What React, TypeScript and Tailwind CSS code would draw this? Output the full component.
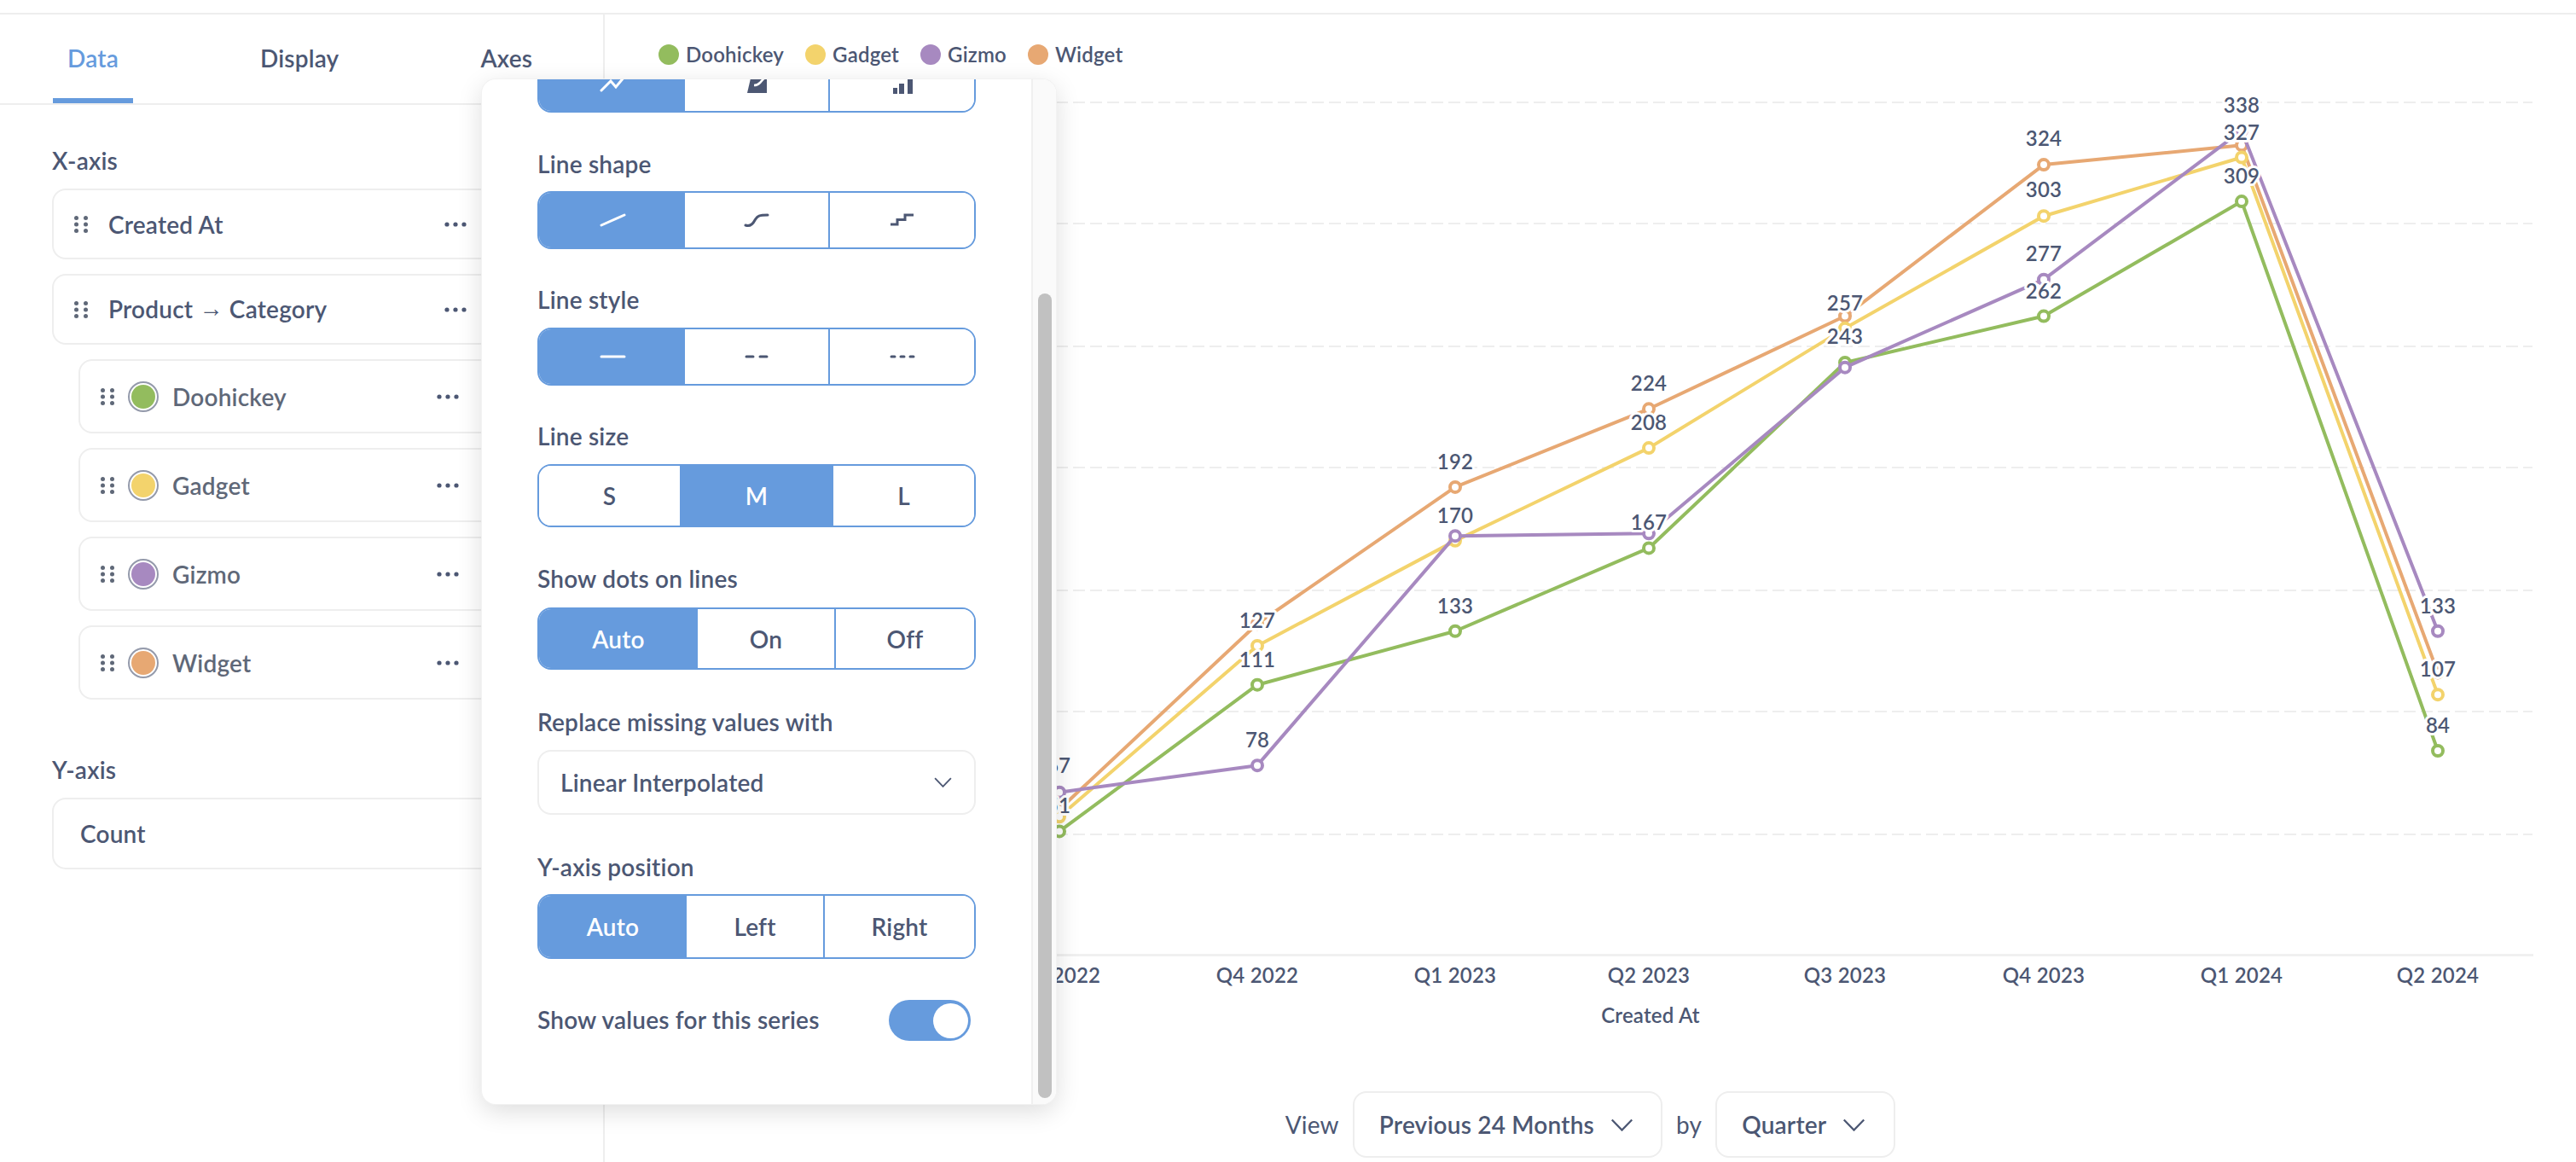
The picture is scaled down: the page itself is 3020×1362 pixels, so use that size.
import { useMemo } from "react";

const quarters = [1242, 1474, 1706, 1933, 2163, 2396, 2628, 2858];
const quarterNames = [
  "Q3 2022",
  "Q4 2022",
  "Q1 2023",
  "Q2 2023",
  "Q3 2023",
  "Q4 2023",
  "Q1 2024",
  "Q2 2024",
];

const yFor = (value: number) => 1120.4 - 2.862 * value;

// drawn in this order, last one on top
const series = [
  {
    name: "Doohickey",
    color: "#93BC5E",
    values: [51, 111, 133, 167, 243, 262, 309, 84],
    legendClass: "bg-[#93BC5E]",
  },
  {
    name: "Widget",
    color: "#E7A873",
    values: [60, 136, 192, 224, 262, 324, 332, 116],
    legendClass: "bg-[#E7A873]",
  },
  {
    name: "Gadget",
    color: "#F3D36C",
    values: [57, 127, 170, 208, 257, 303, 327, 107],
    legendClass: "bg-[#F3D36C]",
  },
  {
    name: "Gizmo",
    color: "#A789C0",
    values: [67, 78, 172, 173, 241, 277, 338, 133],
    legendClass: "bg-[#A789C0]",
  },
];

const legendOrder = ["Doohickey", "Gadget", "Gizmo", "Widget"].map(
  (name) => series.find((s) => s.name === name)!,
);

const valueLabels = [
  { x: 1241, y: 896, text: "67" },
  { x: 1241, y: 943, text: "51" },
  { x: 1474, y: 726, text: "127" },
  { x: 1474, y: 772, text: "111" },
  { x: 1474, y: 866, text: "78" },
  { x: 1706, y: 540, text: "192" },
  { x: 1706, y: 603, text: "170" },
  { x: 1706, y: 709, text: "133" },
  { x: 1933, y: 448, text: "224" },
  { x: 1933, y: 494, text: "208" },
  { x: 1933, y: 611, text: "167" },
  { x: 2163, y: 354, text: "257" },
  { x: 2163, y: 393, text: "243" },
  { x: 2396, y: 161, text: "324" },
  { x: 2396, y: 221, text: "303" },
  { x: 2396, y: 296, text: "277" },
  { x: 2396, y: 340, text: "262" },
  { x: 2628, y: 122, text: "338" },
  { x: 2628, y: 154, text: "327" },
  { x: 2628, y: 205, text: "309" },
  { x: 2858, y: 709, text: "133" },
  { x: 2858, y: 783, text: "107" },
  { x: 2858, y: 849, text: "84" },
];

const DragHandle = function () {
  return (
    <svg className="h-[20px] w-[16px] shrink-0 fill-[#5F6878]" viewBox="0 0 16 20">
      <circle cx="2.5" cy="2.5" r="2.5" />
      <circle cx="13.5" cy="2.5" r="2.5" />
      <circle cx="2.5" cy="10" r="2.5" />
      <circle cx="13.5" cy="10" r="2.5" />
      <circle cx="2.5" cy="17.5" r="2.5" />
      <circle cx="13.5" cy="17.5" r="2.5" />
    </svg>
  );
};

const Ellipsis = function () {
  return (
    <svg className="h-[6px] w-[26px] shrink-0 fill-[#4C5773]" viewBox="0 0 26 6">
      <circle cx="3" cy="3" r="2.6" />
      <circle cx="13" cy="3" r="2.6" />
      <circle cx="23" cy="3" r="2.6" />
    </svg>
  );
};

const Chevron = function ({ className }: { className: string }) {
  return (
    <svg className={className} fill="none" viewBox="0 0 28 16">
      <path d="M1.5 1.5 14 14.5 26.5 1.5" stroke="#4C5773" strokeWidth="2.4" />
    </svg>
  );
};

const FieldCard = function ({ label }: { label: React.ReactNode }) {
  return (
    <div className="flex h-[83px] items-center rounded-2xl border-2 border-[#EEEEEE] pr-[97px] pl-[24px]">
      <DragHandle />
      <span className="ml-[24px] flex-1 text-[28px] font-semibold text-[#4C5773]">
        {label}
      </span>
      <Ellipsis />
    </div>
  );
};

const SeriesCard = function ({
  label,
  dotClass,
}: {
  label: string;
  dotClass: string;
}) {
  return (
    <div className="ml-[31px] flex h-[87px] items-center rounded-2xl border-2 border-[#EEEEEE] pr-[106px] pl-[24px]">
      <DragHandle />
      <span className="ml-[16px] flex size-[36px] shrink-0 items-center justify-center rounded-full border-2 border-[#949AAB]">
        <span className={`size-[28px] rounded-full ${dotClass}`} />
      </span>
      <span className="ml-[16px] flex-1 text-[28px] font-semibold text-[#5F6878]">
        {label}
      </span>
      <Ellipsis />
    </div>
  );
};

const Segmented = function ({
  heightClass,
  options,
  active,
  className = "",
}: {
  heightClass: string;
  options: { key: string; widthClass: string; content: React.ReactNode }[];
  active: number;
  className?: string;
}) {
  return (
    <div
      className={`flex w-[514px] overflow-hidden rounded-2xl border-2 border-[#669BDD] ${heightClass} ${className}`}
    >
      {options.map((option, index) => (
        <div
          className={`flex items-center justify-center text-[28px] font-semibold ${option.widthClass} ${
            index === active
              ? "bg-[#669BDD] text-white"
              : "bg-white text-[#4C5773]"
          } ${index === 2 && active !== 1 ? "border-l-2 border-[#669BDD]" : ""}`}
          key={option.key}
        >
          {option.content}
        </div>
      ))}
    </div>
  );
};

const Icon = function ({ children }: { children: React.ReactNode }) {
  return (
    <svg className="size-[32px]" fill="none" viewBox="0 0 32 32">
      {children}
    </svg>
  );
};

const FieldLabel = function ({ children }: { children: string }) {
  return (
    <div className="h-[34px] text-[28px] leading-[32px] font-semibold text-[#4C5773]">
      {children}
    </div>
  );
};

const SeriesPopover = function () {
  const iconWidths = ["w-[171px]", "w-[168px]", "flex-1"];

  return (
    <div className="absolute top-[93px] left-[565px] z-10 flex h-[1201px] w-[673px] overflow-hidden rounded-2xl bg-white shadow-[0_0_0_1px_#F2F2F2,0_8px_30px_rgba(0,0,0,0.14)]">
      <div className="w-[644px] overflow-hidden pl-[65px]">
        <Segmented
          active={0}
          className="-mt-[29px]"
          heightClass="h-[68px]"
          options={[
            {
              key: "line",
              widthClass: iconWidths[0],
              content: (
                <Icon>
                  <path
                    d="M3 24 14 13l6 7 10-12"
                    stroke="white"
                    strokeLinecap="round"
                    strokeWidth="3"
                  />
                </Icon>
              ),
            },
            {
              key: "area",
              widthClass: iconWidths[1],
              content: (
                <Icon>
                  <path d="M5 27 9 10h19v17Z" fill="#4C5773" />
                  <path d="M13 18c3 0 5-1 7-3s3-4 5-5" stroke="white" strokeWidth="2.500" />
                </Icon>
              ),
            },
            {
              key: "bar",
              widthClass: iconWidths[2],
              content: (
                <Icon>
                  <path
                    d="M5 21h5v7H5ZM12 16h6v12h-6ZM22 10h6v18h-6Z"
                    fill="#4C5773"
                  />
                </Icon>
              ),
            },
          ]}
        />

        <div className="mt-[44px] flex flex-col gap-[14px]">
          <FieldLabel>Line shape</FieldLabel>
          <Segmented
            active={0}
            heightClass="h-[68px]"
            options={[
              {
                key: "straight",
                widthClass: iconWidths[0],
                content: (
                  <Icon>
                    <path
                      d="M3 22 30 10"
                      stroke="white"
                      strokeLinecap="round"
                      strokeWidth="3"
                    />
                  </Icon>
                ),
              },
              {
                key: "curved",
                widthClass: iconWidths[1],
                content: (
                  <Icon>
                    <path
                      d="M3 22c6 2 9-2 11-6 3-5 5-6 15-6"
                      stroke="#4C5773"
                      strokeLinecap="round"
                      strokeWidth="3"
                    />
                  </Icon>
                ),
              },
              {
                key: "step",
                widthClass: iconWidths[2],
                content: (
                  <Icon>
                    <path
                      d="M2 21h8v-5.500h9V10h10"
                      stroke="#4C5773"
                      strokeWidth="3"
                    />
                  </Icon>
                ),
              },
            ]}
          />
        </div>

        <div className="mt-[43px] flex flex-col gap-[15px]">
          <FieldLabel>Line style</FieldLabel>
          <Segmented
            active={0}
            heightClass="h-[68px]"
            options={[
              {
                key: "solid",
                widthClass: iconWidths[0],
                content: (
                  <Icon>
                    <path
                      d="M3 16h27"
                      stroke="white"
                      strokeLinecap="round"
                      strokeWidth="3"
                    />
                  </Icon>
                ),
              },
              {
                key: "dashed",
                widthClass: iconWidths[1],
                content: (
                  <Icon>
                    <path
                      d="M4 16h8M20 16h8"
                      stroke="#4C5773"
                      strokeLinecap="round"
                      strokeWidth="3"
                    />
                  </Icon>
                ),
              },
              {
                key: "dotted",
                widthClass: iconWidths[2],
                content: (
                  <Icon>
                    <path
                      d="M3 16h4M14 16h4M25 16h4"
                      stroke="#4C5773"
                      strokeLinecap="round"
                      strokeWidth="3"
                    />
                  </Icon>
                ),
              },
            ]}
          />
        </div>

        <div className="mt-[43px] flex flex-col gap-[15px]">
          <FieldLabel>Line size</FieldLabel>
          <Segmented
            active={1}
            heightClass="h-[74px]"
            options={[
              { key: "s", widthClass: "w-[165px]", content: "S" },
              { key: "m", widthClass: "w-[180px]", content: "M" },
              { key: "l", widthClass: "flex-1", content: "L" },
            ]}
          />
        </div>

        <div className="mt-[44px] flex flex-col gap-[16px]">
          <FieldLabel>Show dots on lines</FieldLabel>
          <Segmented
            active={0}
            heightClass="h-[73px]"
            options={[
              { key: "auto", widthClass: "w-[186px]", content: "Auto" },
              { key: "on", widthClass: "w-[160px]", content: "On" },
              { key: "off", widthClass: "flex-1", content: "Off" },
            ]}
          />
        </div>

        <div className="mt-[45px] flex flex-col gap-[15px]">
          <FieldLabel>Replace missing values with</FieldLabel>
          <div className="flex h-[76px] w-[514px] items-center justify-between rounded-2xl border-2 border-[#EEEEEE] pr-[26px] pl-[25px]">
            <span className="text-[28px] font-semibold text-[#4C5773]">
              Linear Interpolated
            </span>
            <Chevron className="h-[12px] w-[21px]" />
          </div>
        </div>

        <div className="mt-[45px] flex flex-col gap-[14px]">
          <FieldLabel>Y-axis position</FieldLabel>
          <Segmented
            active={0}
            heightClass="h-[76px]"
            options={[
              { key: "auto", widthClass: "w-[173px]", content: "Auto" },
              { key: "left", widthClass: "w-[160px]", content: "Left" },
              { key: "right", widthClass: "flex-1", content: "Right" },
            ]}
          />
        </div>

        <div className="mt-[48px] flex w-[514px] items-center justify-between pr-[6px]">
          <FieldLabel>Show values for this series</FieldLabel>
          <div className="flex h-[48px] w-[96px] items-center justify-end rounded-full bg-[#669BDD] pr-[3px]">
            <div className="size-[41px] rounded-full bg-white" />
          </div>
        </div>
      </div>

      <div className="flex-1 border-l-2 border-[#F0F0F0] bg-[#FAFAFA] pt-[251px] pl-[6px]">
        <div className="h-[943px] w-[16px] rounded-full bg-[#C1C1C1]" />
      </div>
    </div>
  );
};

const LineChart = function () {
  const paths = useMemo(
    () =>
      series.map((s) => ({
        ...s,
        points: s.values.map((value, index) => ({
          x: quarters[index],
          y: yFor(value),
        })),
      })),
    [],
  );

  return (
    <svg
      className="block h-[1168px] w-[2311px] shrink-0 overflow-visible"
      fill="none"
      viewBox="709 111 2311 1168"
    >
      {[120, 262, 406, 548, 692, 834, 978].map((y) => (
        <path
          d={`M1238 ${y}H2969`}
          key={y}
          stroke="#EEEEEE"
          strokeDasharray="14 6"
          strokeWidth="2"
        />
      ))}
      <path d="M1238 1119.500H2970" stroke="#EEEEEE" strokeWidth="2.500" />

      {paths.map((s) => (
        <g key={s.name}>
          <polyline
            points={s.points.map((p) => `${p.x},${p.y}`).join(" ")}
            stroke={s.color}
            strokeLinejoin="round"
            strokeWidth="4"
          />
          {s.points.map((p) => (
            <circle
              cx={p.x}
              cy={p.y}
              fill="white"
              key={p.x}
              r="6"
              stroke={s.color}
              strokeWidth="4"
            />
          ))}
        </g>
      ))}

      {valueLabels.map((label) => (
        <text
          className="fill-[#4C5773] stroke-white text-[24px] font-semibold [paint-order:stroke]"
          dominantBaseline="central"
          key={`${label.x}-${label.y}`}
          strokeLinejoin="round"
          strokeWidth="6"
          textAnchor="middle"
          x={label.x}
          y={label.y}
        >
          {label.text}
        </text>
      ))}

      {quarterNames.map((name, index) => (
        <text
          className="fill-[#4C5773] text-[24px] font-semibold"
          dominantBaseline="central"
          key={name}
          textAnchor="middle"
          x={quarters[index]}
          y={1142}
        >
          {name}
        </text>
      ))}
      <text
        className="fill-[#4C5773] text-[24px] font-semibold"
        dominantBaseline="central"
        textAnchor="middle"
        x={1935}
        y={1189}
      >
        Created At
      </text>
    </svg>
  );
};

export default function App() {
  return (
    <div className="relative h-[1362px] w-[3020px] overflow-hidden bg-white pt-[15px] font-['Lato',sans-serif] tracking-[0.2px]">
      <div className="flex h-[1347px] border-t-2 border-[#EEEEEE]">
        <div className="h-full w-[709px] shrink-0 border-r-2 border-[#EEEEEE]">
          <div className="flex h-[106px] gap-[132px] border-b-2 border-[#EEEEEE] pl-[62px]">
            <div className="flex h-[104px] flex-col items-center justify-center border-b-[6px] border-[#669BDD] px-[17px] pt-[3px] text-[28px] font-semibold text-[#669BDD]">
              Data
            </div>
            <div className="flex h-[104px] items-center px-[17px] pb-[3px] text-[28px] font-semibold text-[#4C5773]">
              Display
            </div>
            <div className="flex h-[104px] items-center px-[17px] pb-[3px] text-[28px] font-semibold text-[#4C5773]">
              Axes
            </div>
          </div>

          <div className="flex w-[646px] flex-col pt-[49px] pl-[61px]">
            <FieldLabel>X-axis</FieldLabel>
            <div className="mt-[15px] flex flex-col gap-[17px]">
              <FieldCard label="Created At" />
              <FieldCard
                label={
                  <>
                    Product{" "}
                    <span className="inline-block -translate-y-[2px] font-['Liberation_Sans',sans-serif] font-normal">
                      →
                    </span>{" "}
                    Category
                  </>
                }
              />
              {legendOrder.map((s) => (
                <SeriesCard dotClass={s.legendClass} key={s.name} label={s.name} />
              ))}
            </div>
            <div className="mt-[66px]">
              <FieldLabel>Y-axis</FieldLabel>
            </div>
            <div className="mt-[15px] flex h-[84px] items-center rounded-2xl border-2 border-[#EEEEEE] pl-[31px] text-[28px] font-semibold text-[#4C5773]">
              Count
            </div>
          </div>
        </div>

        <div className="flex min-w-0 flex-1 flex-col">
          <div className="flex h-[94px] shrink-0 items-center gap-[25px] pl-[63px]">
            {legendOrder.map((s) => (
              <div className="flex items-center gap-[8px]" key={s.name}>
                <span className={`size-[24px] rounded-full ${s.legendClass}`} />
                <span className="text-[24px] font-semibold text-[#4C5773]">
                  {s.name}
                </span>
              </div>
            ))}
          </div>
          <LineChart />
          <div className="flex h-[78px] items-center justify-center gap-[16px] text-[28px] text-[#4C5773]">
            <span>View</span>
            <div className="flex h-[78px] items-center gap-[19px] rounded-2xl border-2 border-[#EEEEEE] pr-[32px] pl-[29px] font-semibold">
              Previous 24 Months
              <Chevron className="h-[15px] w-[27px]" />
            </div>
            <span>by</span>
            <div className="flex h-[78px] items-center gap-[19px] rounded-2xl border-2 border-[#EEEEEE] pr-[33px] pl-[29px] font-semibold">
              Quarter
              <Chevron className="h-[15px] w-[27px]" />
            </div>
          </div>
        </div>
      </div>

      <SeriesPopover />
    </div>
  );
}
